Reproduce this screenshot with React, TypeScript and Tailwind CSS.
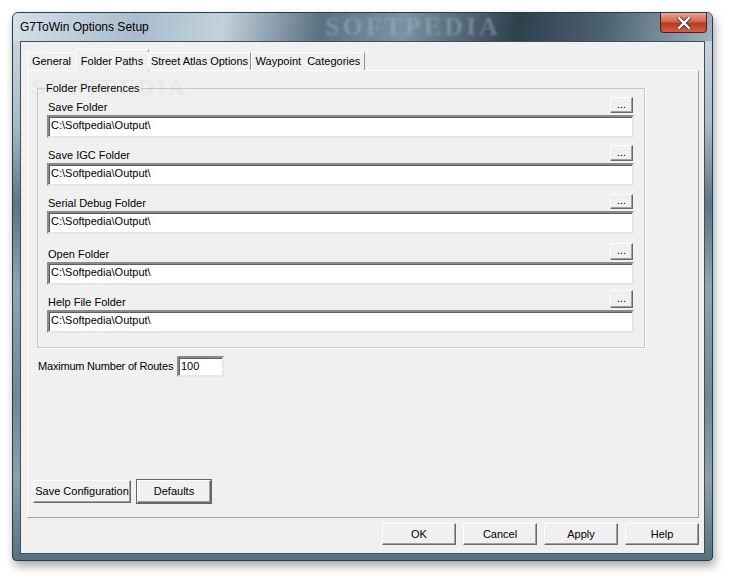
import React from "react";

const font = { fontFamily: '"Liberation Sans", Arial, sans-serif' };

const rows = [
  { label: "Save Folder", mt: "mt-[2px]", btn: "h-[16px]" },
  { label: "Save IGC Folder", mt: "mt-[7px]", btn: "h-[16px]" },
  { label: "Serial Debug Folder", mt: "mt-[8px]", btn: "h-[15px] w-[22px]" },
  { label: "Open Folder", mt: "mt-[9px]", btn: "h-[17px]" },
  { label: "Help File Folder", mt: "mt-[5px]", btn: "h-[18px]" },
];

function Btn({ children, className = "" }: { children?: React.ReactNode; className?: string }) {
  return (
    <button
      className={`flex items-center justify-center whitespace-nowrap bg-[#f0f0f0] border border-t-white border-l-white border-r-[#696969] border-b-[#696969] shadow-[inset_-1px_-1px_0_#a0a0a0] text-[11px] text-black ${className}`}
    >
      {children}
    </button>
  );
}

function Field({ value, className = "" }: { value: string; className?: string }) {
  return (
    <div
      className={`bg-white border-2 border-t-[#8a8a8a] border-l-[#8a8a8a] border-r-[#e6e6e6] border-b-[#e6e6e6] shadow-[inset_1px_1px_0_#5f5f5f] pl-[2px] text-[11px] leading-[17px] text-black whitespace-nowrap ${className}`}
    >
      {value}
    </div>
  );
}

export default function App() {
  return (
    <div className="w-[733px] h-[581px] bg-white overflow-hidden" style={font}>
      <div className="ml-[12px] mt-[12px] w-[701px] h-[549px] rounded-t-[6px] rounded-b-[4px] border border-[#2b3a44] shadow-[2px_5px_10px_rgba(0,0,0,0.35)] bg-[linear-gradient(180deg,#cfdbe4_0%,#a9bccb_20%,#5d7486_35%,#8ea5b5_50%,#6f8797_70%,#8aa0af_85%,#587080_100%)] flex flex-col relative">
        {/* title bar */}
        <div className="h-[28px] shrink-0 rounded-t-[6px] bg-[linear-gradient(100deg,#d4e0e9_0%,#a9bdcc_18%,#c3d1dc_30%,#5b7282_44%,#7b92a2_56%,#2e404c_72%,#4c6170_84%,#9db1bf_100%)] flex items-center pl-[7px] relative overflow-hidden">
          <span className="text-[12px] text-black whitespace-nowrap relative z-10">G7ToWin Options Setup</span>
          <span className="absolute left-[312px] top-0 text-[26px] font-bold tracking-[3px] leading-[28px] text-[#a9bfcf] opacity-40 blur-[1px] whitespace-nowrap" style={{ fontFamily: '"Liberation Serif", serif' }}>
            SOFTPEDIA
          </span>
          <div className="absolute right-[5px] top-0 w-[47px] h-[20px] rounded-b-[4px] border border-[#5a1a12] border-t-0 bg-[linear-gradient(180deg,#e9a792_0%,#d4654b_45%,#b93a22_55%,#d0604a_100%)] flex items-center justify-center">
            <svg width="14" height="12" viewBox="0 0 14 12">
              <path d="M2 1 L12 11 M12 1 L2 11" stroke="#3a2a28" strokeWidth="4" strokeLinecap="square" />
              <path d="M2 1 L12 11 M12 1 L2 11" stroke="#ffffff" strokeWidth="2.4" strokeLinecap="square" />
            </svg>
          </div>
        </div>

        {/* client */}
        <div className="mx-[7px] mb-[6px] flex-1 bg-[#f0f0f0] border border-[#3e4f5a] flex flex-col text-black">
          {/* tabs */}
          <div className="flex items-end pl-[6px] mt-[6px] h-[22px] relative z-10 whitespace-nowrap">
            <div className="w-[49px] h-[18px] border border-b-0 border-t-white border-l-white border-r-[#a0a0a0] flex items-center justify-center text-[11px]">
              General
            </div>
            <div className="w-[74px] h-[22px] -ml-[1px] -mr-[1px] border border-b-0 border-t-white border-l-white border-r-[#8f8f8f] bg-[#f0f0f0] flex items-start pt-[3px] justify-center text-[11px] mb-[-1px]">
              Folder Paths
            </div>
            <div className="w-[103px] h-[18px] border border-b-0 border-t-white border-l-white border-r-[#8f8f8f] flex items-center justify-center text-[11px]">
              Street Atlas Options
            </div>
            <div className="w-[114px] h-[18px] border border-b-0 border-t-white border-l-white border-r-[#8f8f8f] flex items-center justify-center text-[11px]">
              Waypoint&nbsp; Categories
            </div>
          </div>

          {/* tab panel */}
          <div className="ml-[6px] mr-[5px] h-[448px] border border-t-white border-l-white border-r-[#a0a0a0] border-b-[#a0a0a0] flex flex-col relative">
            <span className="absolute left-[4px] top-[3px] text-[24px] font-bold tracking-[2px] leading-[26px] text-[#e8e8e8] pointer-events-none whitespace-nowrap" style={{ fontFamily: '"Liberation Serif", serif' }}>
              SOFTPEDIA
            </span>
            <fieldset className="ml-[9px] mt-[11px] w-[606px] h-[266px] border border-[#c6c6c6] shadow-[1px_1px_0_white] px-[10px] relative">
              <legend className="-ml-[3px] px-[1px] text-[11px] leading-[13px] whitespace-nowrap">Folder Preferences</legend>
              {rows.map((r) => (
                <div key={r.label} className={`flex flex-col ${r.mt}`}>
                  <div className="flex items-end justify-between pr-[1px]">
                    <span className="text-[11px] leading-[13px] mb-[-1px] whitespace-nowrap">{r.label}</span>
                    <Btn className={`w-[23px] ${r.btn} text-[10px] leading-[10px] pb-[3px]`}>...</Btn>
                  </div>
                  <Field value="C:\Softpedia\Output\" className="mt-[2px] h-[23px] -ml-[1px] w-[587px]" />
                </div>
              ))}
            </fieldset>

            <div className="flex items-center ml-[10px] mt-[8px]">
              <span className="text-[11px] tracking-[-0.2px] w-[139px] whitespace-nowrap">Maximum Number of Routes</span>
              <Field value="100" className="w-[47px] h-[21px] leading-[15px]" />
            </div>

            <div className="mt-auto mb-[14px] ml-[5px] flex gap-[6px]">
              <Btn className="w-[98px] h-[23px]">Save Configuration</Btn>
              <Btn className="w-[74px] h-[23px] outline outline-1 outline-[#646464]">Defaults</Btn>
            </div>
          </div>

          {/* dialog buttons */}
          <div className="flex justify-end gap-[7px] mr-[5px] mt-[5px]">
            <Btn className="w-[74px] h-[22px]">OK</Btn>
            <Btn className="w-[74px] h-[22px]">Cancel</Btn>
            <Btn className="w-[74px] h-[22px]">Apply</Btn>
            <Btn className="w-[74px] h-[22px]">Help</Btn>
          </div>
        </div>
      </div>
    </div>
  );
}
